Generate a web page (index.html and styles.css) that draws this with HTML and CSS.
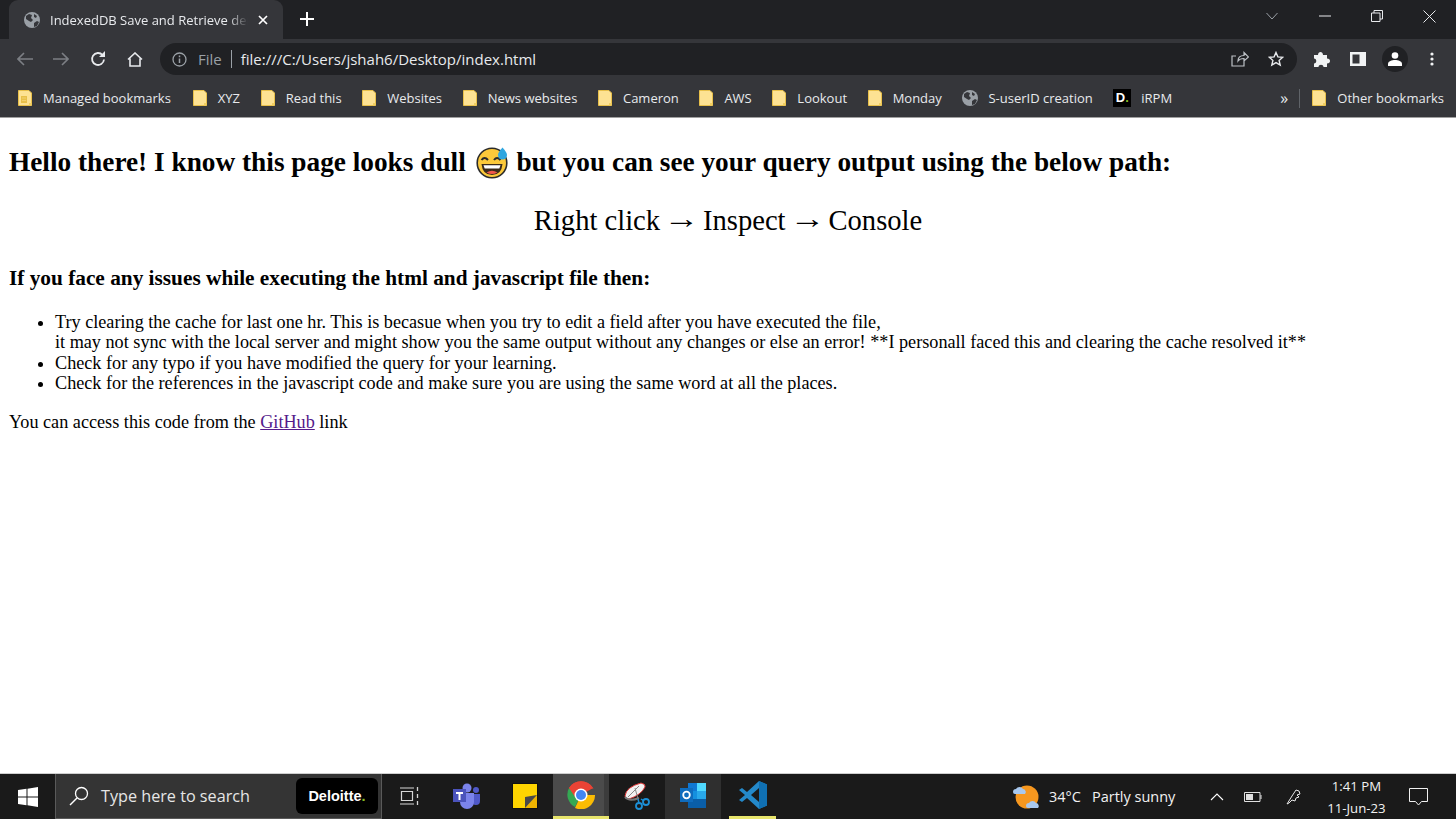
FILE: index.html
```html
<!DOCTYPE html>
<html lang="en">
<head>
    <meta charset="UTF-8">
    <meta name="viewport" content="width=device-width, initial-scale=1.0">
    <title>IndexedDB Save and Retrieve demo</title>
    <link rel="stylesheet" href="styles.css">
</head>
<body>
    <svg class="defs" width="0" height="0">
        <symbol id="folder" viewBox="0 0 14 16">
            <path d="M.5.500h10.500l2.500 2.500v12.500h-13z" fill="#fde293" stroke="#e8c04a"/>
            <path d="M11 13h2.500v2.500h-2.500z" fill="#f1cf62"/>
        </symbol>
        <symbol id="globe" viewBox="0 0 16 16">
            <circle cx="8" cy="8" r="8" fill="#9aa0a6"/>
            <path d="M2 4l3-2 3 1-1 3 2 2-2 2-2-1-3-2zM10 11l3-2 2 1-2 4-3 1zM10 2l3 2-1 2-2-1z" fill="#35363a"/>
        </symbol>
    </svg>

    <div class="tabstrip">
        <div class="tab">
            <svg class="tab-icon" width="16" height="16"><use href="#globe"/></svg>
            <span class="tab-title">IndexedDB Save and Retrieve demo</span>
            <svg class="tab-close" width="10" height="10" viewBox="0 0 10 10"><path d="M1 1l8 8M9 1l-8 8" stroke="#fff" stroke-width="1.700"/></svg>
        </div>
        <svg class="new-tab" width="14" height="14" viewBox="0 0 14 14"><path d="M7 0v14M0 7h14" stroke="#fff" stroke-width="2"/></svg>
        <div class="window-controls">
            <svg width="14" height="8" viewBox="0 0 14 8"><path d="M1.500 1l5.500 6 5.500-6" fill="none" stroke="#9aa0a6"/></svg>
            <svg width="12" height="2" viewBox="0 0 12 2"><path d="M0 1h12" stroke="#e8eaed"/></svg>
            <svg width="12" height="12" viewBox="0 0 12 12"><path d="M.5 3h8.500v8.500h-8.500zM3 3V.5h8.500V9H9" fill="none" stroke="#e8eaed"/></svg>
            <svg width="13" height="13" viewBox="0 0 13 13"><path d="M.5.500l12 12M12.500.500l-12 12" stroke="#e8eaed"/></svg>
        </div>
    </div>

    <div class="toolbar">
        <svg class="nav-btn" width="16" height="14" viewBox="0 0 16 14"><path d="M16 7H1M7 1L1 7l6 6" fill="none" stroke="#7c7f84" stroke-width="1.600"/></svg>
        <svg class="nav-btn" width="16" height="14" viewBox="0 0 16 14"><path d="M0 7h15M9 1l6 6-6 6" fill="none" stroke="#7c7f84" stroke-width="1.600"/></svg>
        <svg class="nav-btn" width="16" height="16" viewBox="0 0 16 16"><path d="M14 8.500a6 6 0 1 1-1.500-4.500" fill="none" stroke="#e8eaed" stroke-width="1.800"/><path d="M15 0v6h-6z" fill="#e8eaed"/></svg>
        <svg class="nav-btn" width="16" height="15" viewBox="0 0 16 15"><path d="M1 7.500L8 1l7 6.500M3 6.500V14h10V6.500" fill="none" stroke="#e8eaed" stroke-width="1.600"/></svg>
        <div class="omnibox">
            <svg width="15" height="15" viewBox="0 0 15 15"><circle cx="7.500" cy="7.500" r="6.500" fill="none" stroke="#9aa0a6" stroke-width="1.300"/><path d="M7.500 6.500v4.500M7.500 3.500v1.700" stroke="#9aa0a6" stroke-width="1.500"/></svg>
            <span class="scheme">File</span>
            <span class="url">file:///C:/Users/jshah6/Desktop/index.html</span>
            <svg class="share" width="18" height="16" viewBox="0 0 18 16"><path d="M13 8.500V15H1V5h4M7 10c0-4 3-5.500 6-5.500V1.500l4.500 4.500L13 10V7.500c-3 0-5 1-6 2.500z" fill="none" stroke="#bdc1c6" stroke-width="1.200"/></svg>
            <svg width="16" height="16" viewBox="0 0 16 16"><path d="M8 1.500l1.900 4.400 4.800.4-3.600 3.100 1.100 4.700L8 11.600l-4.200 2.500 1.100-4.700L1.300 6.300l4.800-.4z" fill="none" stroke="#e8eaed" stroke-width="1.400"/></svg>
        </div>
        <div class="toolbar-actions">
            <svg width="17" height="17" viewBox="0 0 17 17"><path d="M1 4h4c0-4 5-4 5 0h4v3.500c4 0 4 5 0 5V16h-3.500c0-3-5-3-5 0H1v-3.500c3 0 3-5 0-5z" fill="#f1f3f4"/></svg>
            <svg width="16" height="14" viewBox="0 0 16 14"><path d="M0 0h16v14H0z" fill="#f1f3f4"/><path d="M2.500 2.500h7v9h-7z" fill="#35363a"/></svg>
            <div class="avatar"><svg width="14" height="14" viewBox="0 0 14 14"><circle cx="7" cy="3.500" r="3.300" fill="#fff"/><path d="M0 14v-2c0-3 4-4 7-4s7 1 7 4v2z" fill="#fff"/></svg></div>
            <svg width="4" height="14" viewBox="0 0 4 14"><circle cx="2" cy="2" r="1.600" fill="#f1f3f4"/><circle cx="2" cy="7" r="1.600" fill="#f1f3f4"/><circle cx="2" cy="12" r="1.600" fill="#f1f3f4"/></svg>
        </div>
    </div>

    <div class="bookmarks">
        <a class="bookmark managed"><svg width="14" height="16"><use href="#folder"/><path d="M3 6h6v7H3z" fill="#e8c04a"/><path d="M4.500 7.500h1v1h-1zM6.500 7.500h1v1h-1zM4.500 10h1v1h-1zM6.500 10h1v1h-1z" fill="#fde293"/></svg>Managed bookmarks</a>
        <a class="bookmark"><svg width="14" height="16"><use href="#folder"/></svg>XYZ</a>
        <a class="bookmark"><svg width="14" height="16"><use href="#folder"/></svg>Read this</a>
        <a class="bookmark"><svg width="14" height="16"><use href="#folder"/></svg>Websites</a>
        <a class="bookmark"><svg width="14" height="16"><use href="#folder"/></svg>News websites</a>
        <a class="bookmark"><svg width="14" height="16"><use href="#folder"/></svg>Cameron</a>
        <a class="bookmark"><svg width="14" height="16"><use href="#folder"/></svg>AWS</a>
        <a class="bookmark"><svg width="14" height="16"><use href="#folder"/></svg>Lookout</a>
        <a class="bookmark"><svg width="14" height="16"><use href="#folder"/></svg>Monday</a>
        <a class="bookmark site"><svg width="16" height="16"><use href="#globe"/></svg>S-userID creation</a>
        <a class="bookmark"><span class="d-logo">D<i>.</i></span>iRPM</a>
        <span class="chevrons">»</span>
        <span class="bm-sep"></span>
        <a class="bookmark"><svg width="14" height="16"><use href="#folder"/></svg>Other bookmarks</a>
    </div>

    <main class="page">
        <h2>Hello there! I know this page looks dull
            <svg class="emoji" width="33" height="33" viewBox="0 0 33 33">
                <circle cx="16" cy="17" r="14.800" fill="#fcc93a" stroke="#2b2b2b" stroke-width="1.600"/>
                <path d="M5.500 14q3-4 6.500 0M18 14q3-4 6.500 0" fill="none" stroke="#2b2b2b" stroke-width="2"/>
                <path d="M5.500 18h21q-1 11-10.500 11T5.500 18z" fill="#3a2a1a"/>
                <path d="M7.500 19.200h17l-1.200 3.300H8.700z" fill="#fff"/>
                <path d="M10.500 26.500q5.500-3.500 11 0-5.500 3-11 0z" fill="#f0574a"/>
                <path d="M26.500 1.500q4.500 5 4.500 7.500a4.500 4.500 0 0 1-9 0q0-2.500 4.500-7.500z" fill="#2fa6e0"/>
            </svg>
            but you can see your query output using the below path:</h2>
        <p class="path"><span class="step">Right click</span> <span class="arrow">→</span> Inspect <span class="arrow">→</span> Console</p>
        <h3>If you face any issues while executing the html and javascript file then:</h3>
        <ul>
            <li>Try clearing the cache for last one hr. This is becasue when you try to edit a field after you have executed the file,<br>it may not sync with the local server and might show you the same output without any changes or else an error! **I personall faced this and clearing the cache resolved it**</li>
            <li>Check for any typo if you have modified the query for your learning.</li>
            <li>Check for the references in the javascript code and make sure you are using the same word at all the places.</li>
        </ul>
        <p class="source">You can access this code from the <a href="#">GitHub</a> link</p>
    </main>

    <footer class="taskbar">
        <div class="start">
            <svg width="20" height="20" viewBox="0 0 20 20"><path d="M0 3l8.500-1.200V9.500H0zM9.500 1.700L20 0v9.500H9.500zM0 10.500h8.500v7.700L0 17zM9.500 10.500H20V20L9.500 18.300z" fill="#fff"/></svg>
        </div>
        <div class="search">
            <svg width="20" height="20" viewBox="0 0 20 20"><circle cx="12.500" cy="7.500" r="6" fill="none" stroke="#fff" stroke-width="1.300"/><path d="M8 12l-7 7" stroke="#fff" stroke-width="1.500"/></svg>
            <span class="search-text">Type here to search</span>
            <span class="brand">Deloitte<i>.</i></span>
        </div>
        <div class="task-icons">
            <div class="task-item task-view">
                <svg width="19" height="18" viewBox="0 0 19 18"><path d="M1.500 4.500h11v9h-11z" fill="none" stroke="#d5d5d5" stroke-width="1.200"/><path d="M0 1h14M0 17h14" stroke="#d5d5d5" stroke-width="1.200"/><path d="M17.500 0v4M17.500 7v4M17.500 14v4" stroke="#d5d5d5" stroke-width="1.300"/></svg>
            </div>
            <div class="task-item teams">
                <svg width="28" height="26" viewBox="0 0 28 26"><circle cx="14" cy="5" r="4.500" fill="#7b83eb"/><circle cx="23" cy="7" r="3" fill="#5059c9"/><path d="M19 11h8v7a4 4 0 0 1-8 0z" fill="#5059c9"/><path d="M7 10h14v9a7 7 0 0 1-14 0z" fill="#7b83eb"/><path d="M0 6h13v13H0z" fill="#4b53bc"/><path d="M3 9h7v2H7.500v6h-2v-6H3z" fill="#fff"/></svg>
            </div>
            <div class="task-item">
                <svg width="26" height="26" viewBox="0 0 26 26"><path d="M0 0h26v26H0z" fill="#111"/><path d="M1 1h24v24H1z" fill="#ffd500"/><path d="M25 12v13H13z" fill="#f0b400"/><path d="M13 25V14l12-2z" fill="#4a4a4a"/></svg>
            </div>
            <div class="task-item active-chrome">
                <svg width="28" height="28" viewBox="0 0 28 28"><path d="M14 14L2 7A14 14 0 0 1 26 7z" fill="#ea4335"/><path d="M14 14L8 26A14 14 0 0 1 2 7z" fill="#34a853"/><path d="M14 14h14A14 14 0 0 1 8 27z" fill="#fbbc04"/><path d="M14 7.500h12.700L26 7A14 14 0 0 0 2 7l6 9z" fill="#ea4335"/><circle cx="14" cy="14" r="6.500" fill="#fff"/><circle cx="14" cy="14" r="5" fill="#4285f4"/></svg>
            </div>
            <div class="task-item">
                <svg width="26" height="28" viewBox="0 0 26 28"><path d="M1 14Q2 5 17 1q5 1 4 4-4 8-16 12-4 0-4-3z" fill="#f2f2f2" stroke="#d33" stroke-width="1"/><path d="M11 6l3 11M15 4L4 15" stroke="#888"/><path d="M1 15q4 5 14 1" fill="none" stroke="#777" stroke-width="2"/><circle cx="15" cy="24" r="3" fill="none" stroke="#1c8fd6" stroke-width="1.800"/><circle cx="22" cy="20" r="3" fill="none" stroke="#1c8fd6" stroke-width="1.800"/><path d="M14 17l1 4M17 17l3 2" stroke="#1c8fd6" stroke-width="1.500"/></svg>
            </div>
            <div class="task-item running">
                <svg width="27" height="25" viewBox="0 0 27 25"><path d="M8 0h18v25H8z" fill="#0f78d4"/><path d="M17 0h9v8h-9z" fill="#50d9ff"/><path d="M8 8h9v8H8z" fill="#1490df"/><path d="M17 8h9v8h-9z" fill="#28a8ea"/><path d="M8 16h18v9H8z" fill="#0a5ea8"/><path d="M0 5h13v14H0z" fill="#0f6cbd"/><circle cx="6.500" cy="12" r="3.300" fill="none" stroke="#fff" stroke-width="1.800"/></svg>
            </div>
            <div class="task-item active-code">
                <svg width="28" height="28" viewBox="0 0 28 28"><path d="M20 0l8 3.500v21L20 28 8 17l-5 4-3-2 6-5-6-5 3-2 5 4z" fill="#2489ca"/><path d="M20 0l8 3.500v21L20 28z" fill="#1070b3"/><path d="M20 7l-8 7 8 7z" fill="#1a1a1a"/></svg>
            </div>
        </div>
        <div class="weather">
            <svg width="28" height="28" viewBox="0 0 28 28"><circle cx="15" cy="14" r="11.500" fill="#f6971f"/><path d="M1 9a3 3 0 0 1 3-3 4 4 0 0 1 7 0 3 3 0 0 1 2 5H3a2 2 0 0 1-2-2z" fill="#a8c8ee"/><path d="M14 23a3 3 0 0 1 3-3 4 4 0 0 1 7 0 3 3 0 0 1 2 5H16a2 2 0 0 1-2-2z" fill="#a8c8ee"/></svg>
            <span class="temp">34°C</span>
            <span>Partly sunny</span>
        </div>
        <div class="tray">
            <svg width="14" height="8" viewBox="0 0 14 8"><path d="M1 7l6-6 6 6" fill="none" stroke="#fff" stroke-width="1.100"/></svg>
            <svg width="18" height="10" viewBox="0 0 18 10"><path d="M.5.500h15.500v9H.5z" fill="none" stroke="#e0e0e0"/><path d="M2 2h7v6H2z" fill="#e0e0e0"/><path d="M17 3v4" stroke="#e0e0e0"/></svg>
            <svg width="16" height="16" viewBox="0 0 16 16"><path d="M1 15l5-8 4-6 3 1 1 3-3 1 2 2-3 1-1 3-3-1-3 3z" fill="none" stroke="#e8e8e8"/></svg>
            <div class="clock"><span>1:41 PM</span><span>11-Jun-23</span></div>
            <svg class="notify" width="19" height="18" viewBox="0 0 19 18"><path d="M.5.500h18v13h-6l-3 3.500-3-3.500h-6z" fill="none" stroke="#f0f0f0"/></svg>
        </div>
    </footer>
</body>
</html>
```

FILE: styles.css
```css
* {
    box-sizing: border-box;
}
body {
    margin: 0;
    height: 100vh;
    display: flex;
    flex-direction: column;
    overflow: hidden;
    font-family: "Open Sans", "Noto Sans", sans-serif;
    background: #fff;
}
.defs {
    display: none;
}

/* browser chrome */
.tabstrip {
    height: 39px;
    flex: none;
    display: flex;
    align-items: flex-end;
    background: #202124;
    color: #fff;
    padding-left: 9px;
}
.tab {
    width: 274px;
    height: 39px;
    display: flex;
    align-items: center;
    padding: 0 14px 0 15px;
    background: #35363a;
    border-radius: 9px 9px 0 0;
    font-size: 13px;
}
.tab-title {
    width: 198px;
    margin-left: 10px;
    white-space: nowrap;
    overflow: hidden;
    color: #e8eaed;
    -webkit-mask-image: linear-gradient(90deg, #000 90%, transparent);
    mask-image: linear-gradient(90deg, #000 90%, transparent);
}
.tab-close {
    margin-left: 10px;
}
.new-tab {
    margin: 0 0 13px 17px;
}
.window-controls {
    margin-left: auto;
    height: 100%;
    display: flex;
    align-items: center;
    gap: 40px;
    padding: 0 20px 7px 0;
}
.toolbar {
    height: 40px;
    flex: none;
    display: flex;
    align-items: center;
    background: #35363a;
    padding-left: 17px;
}
.nav-btn {
    margin-right: 21px;
}
.nav-btn:first-child {
    margin-right: 20px;
}
.omnibox {
    width: 1137px;
    height: 32px;
    margin-left: -4px;
    display: flex;
    align-items: center;
    padding: 0 13px 0 12px;
    background: #202124;
    border-radius: 16px;
    font-size: 15px;
}
.scheme {
    margin-left: 11px;
    padding-right: 9px;
    color: #9aa0a6;
    border-right: 1px solid #9aa0a6;
    line-height: 18px;
}
.url {
    margin-left: 9px;
    color: #e8eaed;
}
.share {
    margin-left: auto;
    margin-right: 19px;
}
.toolbar-actions {
    display: flex;
    align-items: center;
    margin-left: 16px;
    gap: 20px;
}
.avatar {
    width: 26px;
    height: 26px;
    margin: 0 2px 0 -4px;
    display: flex;
    align-items: center;
    justify-content: center;
    background: #202124;
    border-radius: 50%;
}
.bookmarks {
    height: 39px;
    flex: none;
    display: flex;
    align-items: center;
    padding: 0 12px 0 18px;
    background: #35363a;
    border-bottom: 1px solid #a0a0a0;
    font-size: 13px;
    color: #e8eaed;
}
.bookmark {
    display: flex;
    align-items: center;
    gap: 11px;
    margin-right: 20.600px;
    white-space: nowrap;
}
.bookmark.managed {
    margin-right: 22px;
}
.bookmark.site {
    gap: 10px;
}
.bookmark:last-child {
    margin-right: 0;
}
.d-logo {
    width: 18px;
    height: 18px;
    margin-right: -1px;
    background: #000;
    color: #fff;
    font: bold 13px "Liberation Sans", sans-serif;
    line-height: 18px;
    text-align: center;
}
.d-logo i {
    font-style: normal;
    color: #86bc25;
}
.chevrons {
    margin-left: auto;
    font-size: 16px;
    line-height: 16px;
}
.bm-sep {
    width: 1px;
    height: 19px;
    margin: 0 12px 0 11px;
    background: #5f6368;
}

/* page content */
.page {
    flex: 1;
    padding: 0 9px;
    color: #000;
    font-family: "Liberation Serif", serif;
    font-size: 18.200px;
    line-height: 20.400px;
}
.page h2 {
    margin: 27px 0 0;
    font-size: 27.300px;
    line-height: 34px;
    white-space: nowrap;
}
.emoji {
    vertical-align: -8px;
    margin: 0 1px 0 3px;
}
.path {
    margin: 25px 0 0;
    text-align: center;
    font-size: 28.600px;
    line-height: 34px;
    word-spacing: -4.500px;
}
.step {
    word-spacing: normal;
}
.arrow {
    display: inline-block;
    margin: 0 4.500px;
    transform: translateY(-2px) scaleX(1.250);
}
.page h3 {
    margin: 28px 0 0;
    font-size: 21.300px;
    line-height: 24px;
}
.page ul {
    margin: 22px 0 0;
    padding-left: 46px;
}
.source {
    margin: 18px 0 0;
}
.source a {
    color: #551a8b;
}

/* windows taskbar */
.taskbar {
    height: 46px;
    flex: none;
    display: flex;
    align-items: stretch;
    background: #1a1a1a;
    border-top: 1px solid #cfcfcf;
    color: #f2f2f2;
}
.start {
    width: 55px;
    display: flex;
    align-items: center;
    justify-content: center;
}
.search {
    width: 327px;
    display: flex;
    align-items: center;
    padding: 0 3px 0 13px;
    background: #343434;
    border: 1px solid #5a5a5a;
    border-width: 0 1px 1px 1px;
}
.search-text {
    margin-left: 12px;
    font-size: 16.200px;
    color: #e6e6e6;
}
.brand {
    width: 82px;
    height: 36px;
    margin-left: auto;
    background: #000;
    border-radius: 6px;
    font: bold 14.500px/36px "Liberation Sans", sans-serif;
    text-align: center;
    color: #fff;
}
.brand i {
    font-style: normal;
    color: #86bc25;
}
.task-icons {
    display: flex;
    margin-left: 3px;
}
.task-item {
    width: 56px;
    display: flex;
    align-items: center;
    justify-content: center;
    border-bottom: 2px solid transparent;
}
.task-view svg {
    margin-right: 8px;
}
.teams svg {
    margin-right: 4px;
}
.active-chrome {
    background: #4b4b4b;
    border-bottom: 3px solid #e8e56c;
    box-shadow: inset -5px 0 0 #3c3c3c;
}
.running {
    background: #2f2f2f;
}
.active-code {
    width: 47px;
    margin-left: 8px;
    border-bottom: 3px solid #e8e56c;
}
.weather {
    margin-left: 236px;
    display: flex;
    align-items: center;
    font-size: 14.500px;
}
.temp {
    margin: 0 11px 0 9px;
}
.tray {
    flex: 1;
    display: flex;
    align-items: center;
    padding-left: 35px;
}
.tray svg:nth-child(2) {
    margin-left: 20px;
}
.tray svg:nth-child(3) {
    margin-left: 24px;
}
.clock {
    width: 66px;
    margin-left: 21px;
    display: flex;
    flex-direction: column;
    gap: 4px;
    align-items: center;
    font-size: 13.200px;
    line-height: 18px;
}
.notify {
    margin-left: 20px;
}
```
